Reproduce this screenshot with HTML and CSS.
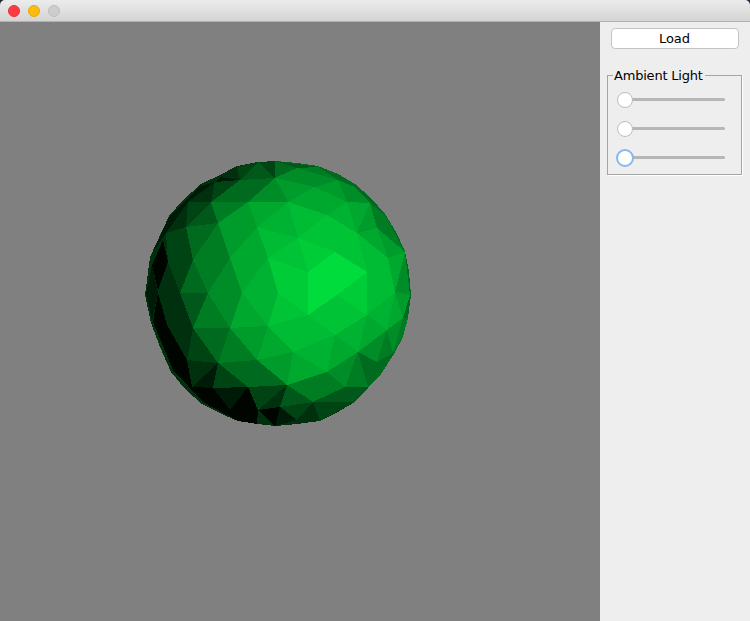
FILE: index.html
```html
<!DOCTYPE html>
<html lang="en">
<head>
<meta charset="utf-8">
<title>Ambient Light</title>
<link rel="stylesheet" href="styles.css">
</head>
<body>
<div class="window">
  <header class="titlebar">
    <span class="light light-close"></span>
    <span class="light light-min"></span>
    <span class="light light-max"></span>
  </header>
  <main class="main">
    <div class="viewport">
      <svg class="scene" viewBox="0 22 600 599" width="600" height="599" shape-rendering="crispEdges">
        <polygon class="k2" points="275,161 297,163 318,166 338,174 355,184 371,198 385,214 396,232 405,251 409,272 411,295 408,318 403,337 394,354 381,374 368,388 355,402 336,413 320,421 297,424 275,426 257,424 238,421 226,416 202,404 185,389 171,372 160,347 151,323 145,295 150,257 169,216 183,200 201,184 220,175 237,166 258,162"/>
        <polygon class="k5" points="275,161 297,163 318,166 338,174 355,184 371,198 385,214 396,232 405,251 409,272 411,295 408,318 403,337 394,354 381,374 368,388 355,402 300,300"/>
        <polygon class="k15" points="308,272 335,252 337,295"/>
        <polygon class="k15" points="335,252 367,272 337,295"/>
        <polygon class="k15" points="308,272 337,295 308,315"/>
        <polygon class="k13" points="337,295 367,272 367,315"/>
        <polygon class="k12" points="337,295 367,315 335,335"/>
        <polygon class="k12" points="337,295 335,335 308,315"/>
        <polygon class="k13" points="335,252 298,238 308,272"/>
        <polygon class="k12" points="298,238 327,215 335,252"/>
        <polygon class="k12" points="327,215 357,233 335,252"/>
        <polygon class="k12" points="357,233 367,272 335,252"/>
        <polygon class="k11" points="357,233 388,258 367,272"/>
        <polygon class="k11" points="367,272 388,258 395,292"/>
        <polygon class="k11" points="367,272 395,292 367,315"/>
        <polygon class="k10" points="367,315 395,292 387,330"/>
        <polygon class="k9" points="367,315 387,330 358,352"/>
        <polygon class="k10" points="367,315 358,352 335,335"/>
        <polygon class="k9" points="335,335 358,352 327,372"/>
        <polygon class="k10" points="335,335 327,372 293,352"/>
        <polygon class="k11" points="335,335 293,352 308,315"/>
        <polygon class="k11" points="308,315 293,352 268,326"/>
        <polygon class="k12" points="308,315 268,326 278,293"/>
        <polygon class="k13" points="308,315 278,293 308,272"/>
        <polygon class="k13" points="308,272 278,293 268,258"/>
        <polygon class="k12" points="308,272 268,258 298,238"/>
        <polygon class="k11" points="268,258 257,227 298,238"/>
        <polygon class="k10" points="257,227 288,202 298,238"/>
        <polygon class="k11" points="288,202 327,215 298,238"/>
        <polygon class="k9" points="288,202 315,187 327,215"/>
        <polygon class="k9" points="315,187 347,202 327,215"/>
        <polygon class="k10" points="327,215 347,202 357,233"/>
        <polygon class="k9" points="347,202 370,203 357,233"/>
        <polygon class="k8" points="370,203 377,228 357,233"/>
        <polygon class="k9" points="377,228 388,258 357,233"/>
        <polygon class="k8" points="377,228 405,252 388,258"/>
        <polygon class="k9" points="388,258 405,252 395,292"/>
        <polygon class="k7" points="405,252 410,295 395,292"/>
        <polygon class="k8" points="395,292 410,295 403,318"/>
        <polygon class="k9" points="395,292 403,318 387,330"/>
        <polygon class="k7" points="387,330 403,318 393,353"/>
        <polygon class="k6" points="387,330 393,353 377,362"/>
        <polygon class="k7" points="387,330 377,362 358,352"/>
        <polygon class="k5" points="358,352 377,362 368,387"/>
        <polygon class="k6" points="358,352 368,387 345,387"/>
        <polygon class="k7" points="358,352 345,387 327,372"/>
        <polygon class="k6" points="327,372 345,387 313,402"/>
        <polygon class="k6" points="327,372 313,402 287,385"/>
        <polygon class="k9" points="327,372 287,385 293,352"/>
        <polygon class="k8" points="293,352 287,385 257,360"/>
        <polygon class="k9" points="293,352 257,360 268,326"/>
        <polygon class="k8" points="268,326 257,360 230,328"/>
        <polygon class="k9" points="268,326 230,328 242,293"/>
        <polygon class="k10" points="268,326 242,293 278,293"/>
        <polygon class="k10" points="278,293 242,293 268,258"/>
        <polygon class="k9" points="242,293 230,258 268,258"/>
        <polygon class="k9" points="268,258 230,258 257,227"/>
        <polygon class="k8" points="230,258 218,223 257,227"/>
        <polygon class="k8" points="218,223 248,202 257,227"/>
        <polygon class="k9" points="248,202 288,202 257,227"/>
        <polygon class="k7" points="248,202 275,178 288,202"/>
        <polygon class="k8" points="275,178 315,187 288,202"/>
        <polygon class="k7" points="275,178 297,168 315,187"/>
        <polygon class="k7" points="297,168 338,180 315,187"/>
        <polygon class="k8" points="315,187 338,180 347,202"/>
        <polygon class="k7" points="338,180 355,187 347,202"/>
        <polygon class="k7" points="347,202 355,187 370,203"/>
        <polygon class="k6" points="370,203 385,215 377,228"/>
        <polygon class="k6" points="377,228 385,215 405,252"/>
        <polygon class="k5" points="240,180 275,178 248,202"/>
        <polygon class="k5" points="211,202 240,180 248,202"/>
        <polygon class="k6" points="211,202 248,202 218,223"/>
        <polygon class="k3" points="215,182 240,180 211,202"/>
        <polygon class="k4" points="240,180 258,162 275,178"/>
        <polygon class="k3" points="258,162 275,161 275,178"/>
        <polygon class="k5" points="275,161 297,168 275,178"/>
        <polygon class="k4" points="275,161 318,167 297,168"/>
        <polygon class="k6" points="318,167 338,180 297,168"/>
        <polygon class="k5" points="318,167 355,187 338,180"/>
        <polygon class="k5" points="355,187 385,215 370,203"/>
        <polygon class="k4" points="211,202 218,223 186,227"/>
        <polygon class="k3" points="188,202 211,202 186,227"/>
        <polygon class="k2" points="215,182 211,202 188,202"/>
        <polygon class="k1" points="201,186 215,182 188,202"/>
        <polygon class="k2" points="220,177 237,167 240,180"/>
        <polygon class="k1" points="220,177 240,180 215,182"/>
        <polygon class="k3" points="237,167 258,162 240,180"/>
        <polygon class="k1" points="201,186 188,202 170,216"/>
        <polygon class="k1" points="170,216 188,202 166,233"/>
        <polygon class="k2" points="188,202 186,227 166,233"/>
        <polygon class="k5" points="186,227 218,223 193,260"/>
        <polygon class="k6" points="218,223 230,258 193,260"/>
        <polygon class="k6" points="193,260 230,258 208,293"/>
        <polygon class="k7" points="230,258 242,293 208,293"/>
        <polygon class="k7" points="208,293 242,293 230,328"/>
        <polygon class="k6" points="208,293 230,328 193,328"/>
        <polygon class="k5" points="193,260 208,293 180,293"/>
        <polygon class="k3" points="186,227 193,260 168,262"/>
        <polygon class="k3" points="166,233 186,227 168,262"/>
        <polygon class="k3" points="168,262 193,260 180,293"/>
        <polygon class="k2" points="168,262 180,293 158,293"/>
        <polygon class="k2" points="152,253 166,233 163,240 152,265"/>
        <polygon class="k2" points="163,240 166,233 168,262"/>
        <polygon class="k1" points="170,216 166,233 152,253"/>
        <polygon class="k0" points="152,265 163,240 168,262 158,290"/>
        <polygon class="k1" points="146,295 152,265 158,293"/>
        <polygon class="k2" points="158,293 180,293 167,325"/>
        <polygon class="k2" points="180,293 193,328 167,325"/>
        <polygon class="k4" points="180,293 208,293 193,328"/>
        <polygon class="k5" points="193,328 230,328 218,363"/>
        <polygon class="k3" points="193,328 218,363 187,360"/>
        <polygon class="k2" points="167,325 193,328 187,360"/>
        <polygon class="k1" points="147,295 158,293 152,320"/>
        <polygon class="k0" points="158,293 167,325 153,322"/>
        <polygon class="k0" points="153,322 167,325 173,370"/>
        <polygon class="k0" points="167,325 187,360 173,370"/>
        <polygon class="k2" points="187,360 218,363 192,387"/>
        <polygon class="k1" points="218,363 213,388 192,387"/>
        <polygon class="k0" points="173,370 187,360 192,387"/>
        <polygon class="k0" points="173,370 192,387 203,402"/>
        <polygon class="k0" points="192,387 213,388 203,402"/>
        <polygon class="k0" points="213,388 230,410 203,402"/>
        <polygon class="k3" points="218,363 248,387 213,388"/>
        <polygon class="k5" points="218,363 257,360 248,387"/>
        <polygon class="k6" points="230,328 257,360 218,363"/>
        <polygon class="k1" points="213,388 248,387 230,410"/>
        <polygon class="k0" points="248,387 258,410 230,410"/>
        <polygon class="k3" points="248,387 287,385 258,410"/>
        <polygon class="k5" points="257,360 287,385 248,387"/>
        <polygon class="k2" points="287,385 280,407 258,410"/>
        <polygon class="k4" points="287,385 313,402 280,407"/>
        <polygon class="k3" points="280,407 313,402 297,420"/>
        <polygon class="k0" points="230,410 258,410 257,424"/>
        <polygon class="k0" points="203,402 230,410 238,421"/>
        <polygon class="k0" points="258,410 280,407 275,426"/>
        <polygon class="k0" points="230,410 257,424 238,421"/>
        <polygon class="k1" points="280,407 297,420 275,426"/>
        <polygon class="k2" points="297,420 313,402 320,421"/>
        <polygon class="k4" points="313,402 345,387 355,402"/>
        <polygon class="k3" points="313,402 355,402 320,421"/>
        <polygon class="k2" points="320,421 355,402 336,413"/>
        <polygon class="k4" points="345,387 368,387 355,402"/>
        <polygon class="k5" points="368,387 377,362 393,353"/>
        <polygon class="k5" points="368,387 393,353 381,374"/>
        <polygon class="k6" points="403,318 408,318 403,337 393,353"/>
      </svg>
    </div>
    <aside class="side">
      <button class="load" type="button">Load</button>
      <fieldset class="group">
        <legend class="group-title">Ambient Light</legend>
        <div class="slider"><span class="thumb"></span></div>
        <div class="slider"><span class="thumb"></span></div>
        <div class="slider"><span class="thumb thumb-focus"></span></div>
      </fieldset>
    </aside>
  </main>
</div>
</body>
</html>
```
FILE: styles.css
```css
html, body {
  margin: 0;
  padding: 0;
  height: 100%;
  background: #1d2433;
  overflow: hidden;
}
body {
  font-family: "DejaVu Sans", sans-serif;
  font-size: 13px;
  color: #000;
}
.window {
  width: 750px;
  height: 621px;
  display: flex;
  flex-direction: column;
  border-radius: 5px 5px 0 0;
  overflow: hidden;
}
.titlebar {
  box-sizing: border-box;
  height: 22px;
  flex: none;
  display: flex;
  align-items: center;
  gap: 8px;
  padding: 0 0 0 8px;
  background: linear-gradient(#ececec, #d4d4d4);
  border-bottom: 1px solid #b1b1b1;
}
.light {
  box-sizing: border-box;
  width: 12px;
  height: 12px;
  border-radius: 50%;
}
.light-close { background: #fc3b45; border: 1px solid #e8303c; }
.light-min { background: #fdbb0c; border: 1px solid #e5aa10; }
.light-max { background: #cdcdcd; border: 1px solid #bcbcbc; }
.main {
  flex: 1;
  display: flex;
  min-height: 0;
}
.viewport {
  width: 600px;
  flex: none;
  background: #808080;
}
.scene { display: block; }
.k0 { fill: #000500; }
.k1 { fill: #001a08; }
.k2 { fill: #00300e; }
.k3 { fill: #004414; }
.k4 { fill: #00581a; }
.k5 { fill: #006a1e; }
.k6 { fill: #007c22; }
.k7 { fill: #008c27; }
.k8 { fill: #009c2b; }
.k9 { fill: #00a82e; }
.k10 { fill: #00b231; }
.k11 { fill: #00bc34; }
.k12 { fill: #00c436; }
.k13 { fill: #00cc38; }
.k15 { fill: #00dc3c; }
.side {
  flex: 1;
  background: #eeeeee;
  display: flex;
  flex-direction: column;
  align-items: flex-start;
  padding: 6px 8px 0 7px;
}
.load {
  box-sizing: border-box;
  align-self: center;
  width: 128px;
  height: 21px;
  margin: 0;
  padding: 0;
  background: #fff;
  border: 1px solid #c4c4c4;
  border-radius: 4px;
  font: 13px "DejaVu Sans", sans-serif;
  color: #000;
}
.group {
  box-sizing: border-box;
  width: 135px;
  height: 109px;
  margin: 17px 0 0;
  padding: 1px 16px 0 9px;
  border: 1px solid #a5a5a5;
  box-shadow: 1px 1px 0 #fff;
}
.group-title {
  margin-left: -4px;
  padding: 2px 2px 0 1px;
  line-height: 16px;
  letter-spacing: -0.2px;
  white-space: nowrap;
}
.slider {
  position: relative;
  height: 29px;
  display: flex;
  align-items: center;
}
.slider::before {
  content: "";
  position: absolute;
  left: 8px;
  right: 0;
  top: 13px;
  height: 3px;
  border-radius: 2px;
  background: #b6b6b6;
}
.thumb {
  position: relative;
  box-sizing: border-box;
  width: 16px;
  height: 16px;
  border-radius: 50%;
  background: #fff;
  border: 1px solid #bdbdbd;
}
.thumb-focus {
  width: 18px;
  height: 18px;
  margin-left: -1px;
  border: 2px solid #84b8ee;
}
```
